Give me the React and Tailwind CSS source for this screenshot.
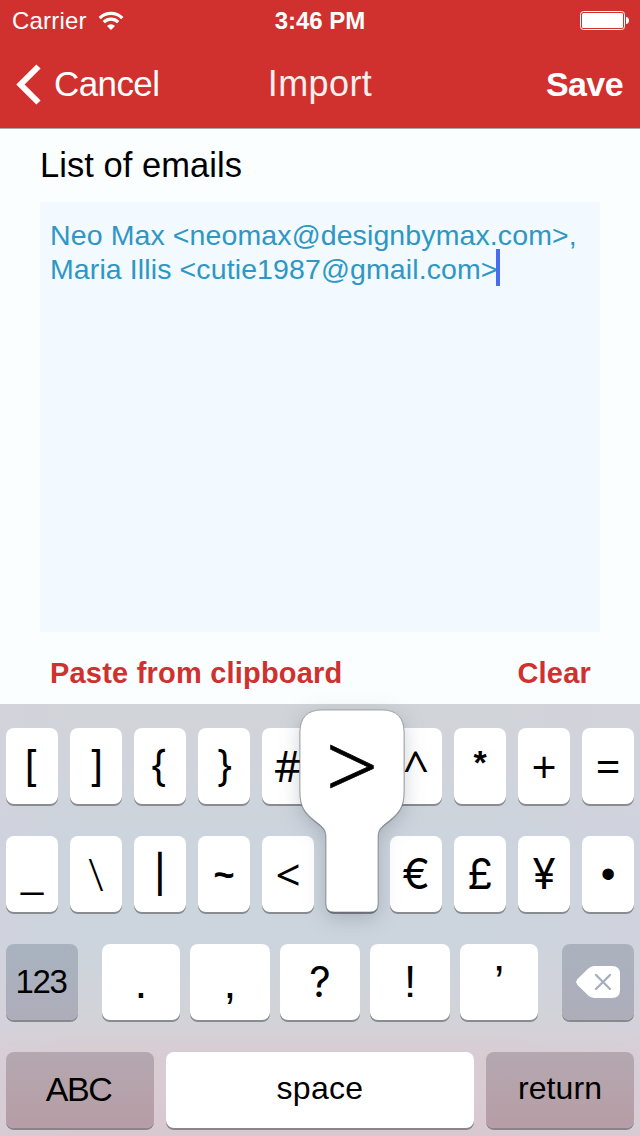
const rowOne = [
  { label: '[', cls: "pr-[2px] font-['Inter',sans-serif] text-[42px] font-normal" },
  { label: ']', cls: "pl-[2px] font-['Inter',sans-serif] text-[42px] font-normal" },
  { label: '{', cls: "pr-[3px] font-['Inter',sans-serif] text-[42px] font-normal" },
  { label: '}', cls: "pl-[2px] font-['Inter',sans-serif] text-[42px] font-normal" },
  { label: '#', cls: "font-['Open_Sans',sans-serif] text-[43px] font-normal" },
  { label: '', cls: '' },
  { label: '^', cls: "font-['Open_Sans',sans-serif] text-[46px] font-normal" },
  { label: '*', cls: 'pb-[8px] text-[34px] font-bold' },
  { label: '+', cls: "font-['Open_Sans',sans-serif] text-[44px] font-normal" },
  { label: '=', cls: "font-['Open_Sans',sans-serif] text-[44px] font-normal" },
];

const rowTwo = [
  { label: '_', cls: 'pb-[3px] text-[40px]' },
  { label: '\\', cls: "font-['Open_Sans',sans-serif] text-[45px] font-light" },
  { label: '|', cls: "font-['Inter',sans-serif] text-[37px] font-medium" },
  { label: '~', cls: 'pt-[2px] text-[36px] font-bold' },
  { label: '<', cls: "font-['Open_Sans',sans-serif] text-[44px] font-normal" },
  { label: '', cls: '' },
  { label: '€', cls: "font-['Inter',sans-serif] text-[42px] font-normal" },
  { label: '£', cls: "font-['Inter',sans-serif] text-[42px] font-normal" },
  { label: '¥', cls: "font-['Inter',sans-serif] text-[42px] font-normal" },
  { label: '•', cls: 'text-[42px]' },
];

const rowThree = [
  { label: '.', cls: 'w-[78px] text-[46px]' },
  { label: ',', cls: 'w-[80px] text-[46px]' },
  { label: '?', cls: "w-[80px] font-['Inter',sans-serif] text-[42px]" },
  { label: '!', cls: 'w-[80px] text-[44px]' },
  { label: '’', cls: 'w-[78px] text-[46px]' },
];

function Key({ label, className = '' }) {
  return (
    <button
      className={`flex h-[76px] shrink-0 items-center justify-center rounded-[8px] bg-white leading-[76px] text-black shadow-[0_2px_0_#888b8f] ${className}`}
    >
      {label}
    </button>
  );
}

function StatusBar() {
  return (
    <div className="grid h-10 grid-cols-3 items-center text-white">
      <div className="flex items-center gap-[11px] pl-[12px]">
        <span className="pt-px text-[24px] leading-10 tracking-[0.2px]">Carrier</span>
        <svg width="26" height="20" viewBox="0 0 26 20" fill="none" stroke="white">
          <path d="M1.7 7.1a16 16 0 0 1 22.6 0" strokeWidth="3.200" />
          <path d="M5.8 11.2a10.2 10.2 0 0 1 14.4 0" strokeWidth="3.200" />
          <path d="M13 19l-4-4a5.7 5.7 0 0 1 8 0z" fill="white" stroke="none" />
        </svg>
      </div>
      <span className="pt-px text-center text-[24px] leading-10 font-bold">3:46 PM</span>
      <div className="flex justify-end pr-[11px]">
        <svg width="49" height="19" viewBox="0 0 49 19">
          <rect x="0.5" y="0.5" width="44" height="18" rx="3" fill="none" stroke="white" />
          <rect x="2" y="2" width="41" height="15" rx="1.5" fill="white" />
          <path d="M46 6c2 0 3 1.600 3 3.500s-1 3.500-3 3.500z" fill="white" />
        </svg>
      </div>
    </div>
  );
}

function NavBar() {
  return (
    <div className="grid h-[88px] grid-cols-3 items-center pb-px text-white">
      <div className="flex items-center gap-[12px] pl-[16px]">
        <svg width="26" height="42" viewBox="0 0 26 42" fill="none" stroke="white" strokeWidth="6">
          <path d="M22.500 3.500L4.500 21.500L22.500 39.500" />
        </svg>
        <span className="pt-px text-[35px] leading-[86px] tracking-[-0.6px]">Cancel</span>
      </div>
      <span className="text-center text-[36px] leading-[86px] tracking-[0.4px] text-[#fbeeee]">Import</span>
      <span className="pr-[17px] text-right text-[34px] leading-[86px] font-bold tracking-[-0.6px]">Save</span>
    </div>
  );
}

function KeyPopup() {
  return (
    <div className="pointer-events-none absolute top-0 left-[280px] h-[220px] w-[144px]">
      <svg className="absolute inset-0 overflow-visible" width="144" height="220" viewBox="0 0 144 220">
        <path
          d="M42 6H102C117 6 124 14 124 28V88C124 102 120 108 109 117C101 123 98 125 98 134V200Q98 208 90 208H54Q46 208 46 200V134C46 125 43 123 35 117C24 108 20 102 20 88V28C20 14 27 6 42 6Z"
          className="fill-white stroke-[#85898f] stroke-[0.7] [filter:drop-shadow(0_1px_0.5px_rgba(50,55,60,.4))_drop-shadow(0_5px_10px_rgba(60,70,85,.25))]"
        />
      </svg>
      <span className="absolute top-[13px] left-0 w-[144px] text-center font-['Open_Sans',sans-serif] text-[92px] leading-[96px] font-light text-black [-webkit-text-stroke:0.8px_black]">&gt;</span>
    </div>
  );
}

function Keyboard() {
  return (
    <div className="relative flex h-[432px] flex-col gap-8 bg-[linear-gradient(90deg,rgba(215,208,222,.35),transparent_12%,transparent_75%,rgba(215,208,222,.35)),linear-gradient(180deg,#d1d4d9_0%,#d0d4da_15%,#ccd4dd_31%,#ccd4dd_55%,#d0d4da_66%,#d3d2d8_75%,#d8cdd3_80%,#d8c9cf_100%)] px-[6px] pt-6">
      <div className="flex justify-between">
        {rowOne.map((k, i) => (
          <Key key={i} label={k.label} className={`w-[52px] ${k.cls}`} />
        ))}
      </div>
      <div className="flex justify-between">
        {rowTwo.map((k, i) => (
          <Key key={i} label={k.label} className={`w-[52px] ${k.cls}`} />
        ))}
      </div>
      <div className="flex justify-between">
        <button className="flex h-[76px] w-[72px] items-center justify-center rounded-[8px] bg-linear-to-b from-[#a8b3bf] to-[#aeadba] pr-[2px] text-[33px] tracking-[-1.400px] shadow-[0_2px_0_#88888d]">
          123
        </button>
        <div className="flex gap-[10px]">
          {rowThree.map((k) => (
            <Key key={k.label} label={k.label} className={k.cls} />
          ))}
        </div>
        <button className="flex h-[76px] w-[72px] items-center justify-center rounded-[8px] bg-linear-to-b from-[#aab2be] to-[#aeadba] shadow-[0_2px_0_#88888d]">
          <svg width="44" height="32" viewBox="0 0 44 32">
            <path d="M0 16L1.500 13L12 2.800Q15 0 18 0H36Q44 0 44 8V24Q44 32 36 32H18Q15 32 12 29.200L1.500 19Z" fill="white" />
            <path d="M20 9L34 23M34 9L20 23" stroke="#a9b0bd" strokeWidth="2.400" strokeLinecap="round" />
          </svg>
        </button>
      </div>
      <div className="flex justify-between">
        <button className="flex h-[76px] w-[148px] items-center justify-center rounded-[8px] bg-linear-to-b from-[#b4a8b1] to-[#b79da5] pr-[3px] pb-[2px] text-[34px] tracking-[-1.500px] shadow-[0_2px_0_#88858a]">
          ABC
        </button>
        <button className="flex h-[76px] w-[308px] items-center justify-center rounded-[8px] bg-white pb-[4px] text-[32px] tracking-[0.3px] shadow-[0_2px_0_#88858a]">
          space
        </button>
        <button className="flex h-[76px] w-[148px] items-center justify-center rounded-[8px] bg-linear-to-b from-[#b4a8b1] to-[#b79da5] pb-[4px] text-[32px] tracking-[0.1px] shadow-[0_2px_0_#88858a]">
          return
        </button>
      </div>
      <KeyPopup />
    </div>
  );
}

export default function App() {
  return (
    <div className="flex h-[1136px] w-[640px] flex-col overflow-hidden bg-[#fbfeff] font-['Liberation_Sans',Arial,sans-serif] text-black">
      <header className="h-[129px] border-b border-[#a8a8a8] bg-[#d0312e]">
        <StatusBar />
        <NavBar />
      </header>
      <main className="flex h-[575px] flex-col px-10">
        <h1 className="h-[73px] text-[34.500px] leading-[72px] tracking-[0.05px]">List of emails</h1>
        <div className="h-[430px] bg-[#f2f9ff] pt-[16px] pl-[10px] text-[28.500px] leading-[34px] tracking-[0.11px] text-[#2e97c3]">
          <p className="whitespace-nowrap">Neo Max &lt;neomax@designbymax.com&gt;,</p>
          <div className="flex items-center whitespace-nowrap">
            Maria Illis &lt;cutie1987@gmail.com&gt;
            <span className="-mt-[12px] -mb-2 -ml-[2px] h-[37px] w-1 bg-[#476cf0]" />
          </div>
        </div>
        <div className="flex h-[72px] justify-between pr-[9px] pl-[10px] text-[29px] leading-[82px] font-bold tracking-[0.2px] text-[#d0312e]">
          <button>Paste from clipboard</button>
          <button>Clear</button>
        </div>
      </main>
      <Keyboard />
    </div>
  );
}
